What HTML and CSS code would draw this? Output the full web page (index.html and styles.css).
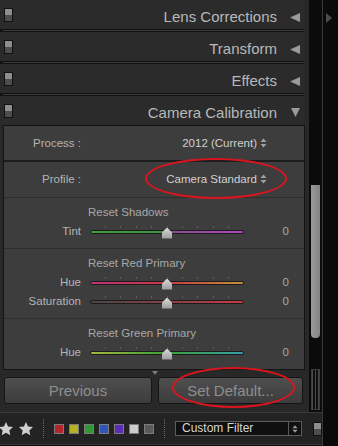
FILE: index.html
```html
<!DOCTYPE html>
<html lang="en">
<head>
    <meta charset="UTF-8">
    <meta name="viewport" content="width=device-width, initial-scale=1.0">
    <title>Develop Panels</title>
    <link rel="stylesheet" href="styles.css">
</head>
<body>
<div class="app">
    <div class="main">
        <div class="top">
            <div class="panels">
                <div class="section-head">
                    <span class="toggle"></span>
                    <span class="head-title">Lens Corrections</span>
                    <svg class="head-arrow" width="10" height="9" viewBox="0 0 10 9"><polygon points="10,0 10,9 0,4.5" fill="#9b9b9b"/></svg>
                </div>
                <div class="head-rule"></div>
                <div class="section-head">
                    <span class="toggle"></span>
                    <span class="head-title">Transform</span>
                    <svg class="head-arrow" width="10" height="9" viewBox="0 0 10 9"><polygon points="10,0 10,9 0,4.5" fill="#9b9b9b"/></svg>
                </div>
                <div class="head-rule"></div>
                <div class="section-head">
                    <span class="toggle"></span>
                    <span class="head-title">Effects</span>
                    <svg class="head-arrow" width="10" height="9" viewBox="0 0 10 9"><polygon points="10,0 10,9 0,4.5" fill="#9b9b9b"/></svg>
                </div>
                <div class="head-rule"></div>
                <div class="section-head">
                    <span class="toggle"></span>
                    <span class="head-title open">Camera Calibration</span>
                    <svg class="head-arrow down" width="9" height="9" viewBox="0 0 9 9"><polygon points="0,0 9,0 4.5,9" fill="#9b9b9b"/></svg>
                </div>

                <div class="calib">
                    <div class="select-row process">
                        <span class="row-label">Process :</span>
                        <span class="row-value">2012 (Current)<svg class="updown" width="7" height="10" viewBox="0 0 7 10"><polygon points="0.5,4 3.5,0.5 6.5,4" fill="#a0a0a0"/><polygon points="0.5,6 3.5,9.5 6.5,6" fill="#a0a0a0"/></svg></span>
                    </div>
                    <div class="select-row profile">
                        <span class="row-label">Profile :</span>
                        <span class="row-value">Camera Standard<svg class="updown" width="7" height="10" viewBox="0 0 7 10"><polygon points="0.5,4 3.5,0.5 6.5,4" fill="#a0a0a0"/><polygon points="0.5,6 3.5,9.5 6.5,6" fill="#a0a0a0"/></svg></span>
                    </div>
                    <span class="callout callout-profile"></span>

                    <div class="group">
                        <div class="group-title">Reset Shadows</div>
                        <div class="slider-row">
                            <span class="slider-label">Tint</span>
                            <span class="track tint"><span class="thumb"></span></span>
                            <span class="slider-value">0</span>
                        </div>
                    </div>
                    <div class="group">
                        <div class="group-title">Reset Red Primary</div>
                        <div class="slider-row">
                            <span class="slider-label">Hue</span>
                            <span class="track red-hue"><span class="thumb"></span></span>
                            <span class="slider-value">0</span>
                        </div>
                        <div class="slider-row">
                            <span class="slider-label">Saturation</span>
                            <span class="track red-sat"><span class="thumb"></span></span>
                            <span class="slider-value">0</span>
                        </div>
                    </div>
                    <div class="group last">
                        <div class="group-title">Reset Green Primary</div>
                        <div class="slider-row">
                            <span class="slider-label">Hue</span>
                            <span class="track green-hue"><span class="thumb"></span></span>
                            <span class="slider-value">0</span>
                        </div>
                    </div>
                </div>

                <div class="collapse-mark">
                    <svg width="6" height="4" viewBox="0 0 6 4"><polygon points="0,0 6,0 3,4" fill="#7a7a7a"/></svg>
                </div>
                <div class="btn-row">
                    <button type="button" class="btn prev-btn">Previous</button>
                    <button type="button" class="btn default-btn">Set Default...</button>
                    <span class="callout callout-default"></span>
                </div>
            </div>
            <div class="scroll-track">
                <div class="scroll-thumb"></div>
                <div class="scroll-grip"></div>
            </div>
        </div>

        <div class="filter-bar">
            <svg class="star first" width="16" height="16" viewBox="0 0 24 24"><polygon points="12,1.5 15.1,8.3 22.5,9.1 17,14.1 18.5,21.5 12,17.8 5.5,21.5 7,14.1 1.5,9.1 8.9,8.3" fill="#cfcfcf"/></svg>
            <svg class="star" width="16" height="16" viewBox="0 0 24 24"><polygon points="12,1.5 15.1,8.3 22.5,9.1 17,14.1 18.5,21.5 12,17.8 5.5,21.5 7,14.1 1.5,9.1 8.9,8.3" fill="#cfcfcf"/></svg>
            <span class="dots"></span>
            <div class="swatches">
                <span class="swatch red"></span>
                <span class="swatch yellow"></span>
                <span class="swatch green"></span>
                <span class="swatch blue"></span>
                <span class="swatch purple"></span>
                <span class="swatch white"></span>
                <span class="swatch gray"></span>
            </div>
            <span class="dots"></span>
            <div class="filter-select">
                <span class="filter-text">Custom Filter</span>
                <span class="filter-arrows"><svg width="6" height="10" viewBox="0 0 7 10"><polygon points="0.5,4 3.5,0.5 6.5,4" fill="#9a9a9a"/><polygon points="0.5,6 3.5,9.5 6.5,6" fill="#9a9a9a"/></svg></span>
            </div>
            <span class="toggle bar-toggle"></span>
        </div>
    </div>
    <div class="side-strip">
        <svg width="6" height="10" viewBox="0 0 6 10"><polygon points="0,0 6,5 0,10" fill="#4d4d4d"/></svg>
    </div>
</div>
</body>
</html>
```

FILE: styles.css
```css
* {
    box-sizing: border-box;
}
body {
    margin: 0;
    padding: 0;
    background-color: #0b0b0b;
    font-family: "Liberation Sans", Arial, sans-serif;
}
.app {
    display: flex;
    width: 338px;
    height: 446px;
    overflow: hidden;
}
.main {
    width: 323px;
    display: flex;
    flex-direction: column;
    border-right: 1px solid #3a3a3a;
}
.top {
    display: flex;
    height: 412px;
}
.panels {
    width: 309px;
    background: #282828;
}

/* panel headers */
.section-head {
    display: flex;
    align-items: flex-start;
    width: 304px;
    height: 29px;
    padding-top: 4px;
    background: #2b2b2b;
}
.toggle {
    display: block;
    width: 9px;
    height: 14px;
    margin: 4px 0 0 4px;
    border: 1px solid #111;
    background: linear-gradient(#8e8e8e 0, #8e8e8e 50%, #4c4c4c 50%, #4c4c4c 100%);
}
.head-title {
    flex: 1;
    text-align: right;
    font-size: 15px;
    line-height: 25px;
    color: #b8b8b8;
    margin-right: 13px;
}
.head-title.open {
    margin-right: 14px;
}
.head-arrow {
    margin: 9px 4px 0 0;
}
.head-arrow.down {
    margin-top: 8px;
}
.head-rule {
    width: 304px;
    height: 3px;
    background: linear-gradient(#3b3b3b, #3b3b3b) 3px 1px / 301px 1px no-repeat, #111;
}

/* camera calibration panel */
.calib {
    position: relative;
    margin-left: 3px;
    width: 302px;
    border: 1px solid #141414;
    background: #3d3d3d;
}
.select-row {
    display: flex;
    font-size: 11.5px;
    color: #b4b4b4;
}
.process {
    height: 36px;
    line-height: 34px;
    border-bottom: 2px solid #1c1c1c;
}
.profile {
    height: 36px;
    line-height: 35px;
    border-bottom: 1px solid #2f2f2f;
}
.row-label {
    width: 77px;
    text-align: right;
}
.row-value {
    margin-left: auto;
    margin-right: 37px;
    color: #d0d0d0;
}
.updown {
    margin-left: 3px;
    vertical-align: -1px;
}
.callout {
    position: absolute;
    border: 2px solid #d9161f;
    border-radius: 50%;
    pointer-events: none;
}
.callout-profile {
    left: 141px;
    top: 32px;
    width: 142px;
    height: 41px;
}
.group {
    padding: 5px 0 7px;
    border-bottom: 1px solid #303030;
}
.group.last {
    border-bottom: none;
}
.group-title {
    font-size: 11.5px;
    line-height: 19px;
    color: #a8a8a8;
    padding-left: 84px;
}
.slider-row {
    display: flex;
    align-items: center;
    height: 19px;
    font-size: 11.5px;
    line-height: 19px;
    color: #b4b4b4;
}
.slider-label {
    width: 77px;
    text-align: right;
}
.track {
    position: relative;
    margin-left: 9px;
    width: 154px;
    height: 4px;
    border: 1px solid #1c1c1c;
    border-radius: 2px;
}
.track::before {
    content: "";
    position: absolute;
    left: 14px;
    width: 125px;
    top: -5px;
    height: 2px;
    background: repeating-linear-gradient(to right, #5e5e5e 0, #5e5e5e 1px, transparent 1px, transparent 15.4px);
}
.thumb {
    position: absolute;
    left: 50%;
    top: -3px;
    width: 10px;
    height: 11px;
    margin-left: -5px;
    clip-path: polygon(50% 0, 100% 45%, 100% 100%, 0 100%, 0 45%);
    background: linear-gradient(#dadada, #9a9a9a);
}
.tint {
    background: linear-gradient(to right, #3aa03a 0%, #44923f 44%, #8a4c96 56%, #b048b8 100%);
}
.red-hue {
    background: linear-gradient(to right, #c0307a 0%, #c83a44 50%, #c0903a 100%);
}
.red-sat {
    background: linear-gradient(to right, #4a4545 0%, #864048 50%, #c83a44 100%);
}
.green-hue {
    background: linear-gradient(to right, #a8b83a 0%, #3aa03a 50%, #38a0a8 100%);
}
.slider-value {
    width: 45px;
    text-align: right;
    color: #a8a8a8;
}

/* buttons */
.collapse-mark {
    height: 7px;
    padding: 1px 0 0 152px;
}
.collapse-mark svg {
    display: block;
}
.btn-row {
    position: relative;
    display: flex;
    gap: 6px;
    height: 27px;
    padding-left: 4px;
}
.btn {
    height: 27px;
    padding: 0;
    border: 1px solid #151515;
    border-radius: 3px;
    background: linear-gradient(#4f4f4f, #3c3c3c);
    color: #8e8e8e;
    font-family: "Liberation Sans", Arial, sans-serif;
    font-size: 15px;
}
.prev-btn {
    width: 148px;
}
.default-btn {
    width: 145px;
}
.callout-default {
    left: 172px;
    top: -10px;
    width: 123px;
    height: 41px;
}

/* scroll bar */
.scroll-track {
    width: 13px;
    background: #0b0b0b;
}
.scroll-thumb {
    width: 9px;
    height: 153px;
    margin: 185px 0 0 2px;
    border-radius: 0 0 4px 4px;
    background: linear-gradient(to right, #9a9a9a, #848484);
}
.scroll-grip {
    width: 9px;
    height: 41px;
    margin: 31px 0 0 2px;
    border: 1px solid #3c3c3c;
    background: repeating-linear-gradient(to right, #4a4a4a 0, #4a4a4a 1px, #0e0e0e 1px, #0e0e0e 3px);
}

/* filter bar */
.filter-bar {
    display: flex;
    align-items: center;
    height: 33px;
    border-top: 1px solid #3a3a3a;
    border-bottom: 1px solid #383838;
    background: #232323;
}
.star {
    display: block;
}
.star.first {
    margin-left: -2px;
    margin-right: 4px;
}
.dots {
    width: 1px;
    height: 19px;
    margin-left: 9px;
    border-left: 1px dotted #6a6a6a;
}
.swatches {
    display: flex;
    gap: 5px;
    margin-left: 10px;
}
.swatch {
    width: 10px;
    height: 10px;
    border: 1px solid #7c7c7c;
}
.swatch.red { background: #b5262c; }
.swatch.yellow { background: #b3b324; }
.swatch.green { background: #2f9a34; }
.swatch.blue { background: #2d56b8; }
.swatch.purple { background: #5a2cb8; }
.swatch.white { background: #cccccc; }
.swatch.gray { background: #5a5a5a; }
.swatches + .dots {
    margin-left: 10px;
}
.filter-select {
    display: flex;
    width: 127px;
    height: 15px;
    margin-left: 10px;
    border: 1px solid #5c5c5c;
    background: #101010;
    font-size: 12px;
    line-height: 13px;
    color: #d6d6d6;
}
.filter-text {
    flex: 1;
    padding-left: 6px;
}
.filter-arrows {
    display: flex;
    align-items: center;
    justify-content: center;
    width: 13px;
    border-left: 1px solid #5c5c5c;
}
.bar-toggle {
    margin: 0 0 0 11px;
}

.side-strip {
    width: 15px;
    background: #0a0a0a;
    padding: 13px 0 0 3px;
}
.side-strip svg {
    display: block;
}
```
